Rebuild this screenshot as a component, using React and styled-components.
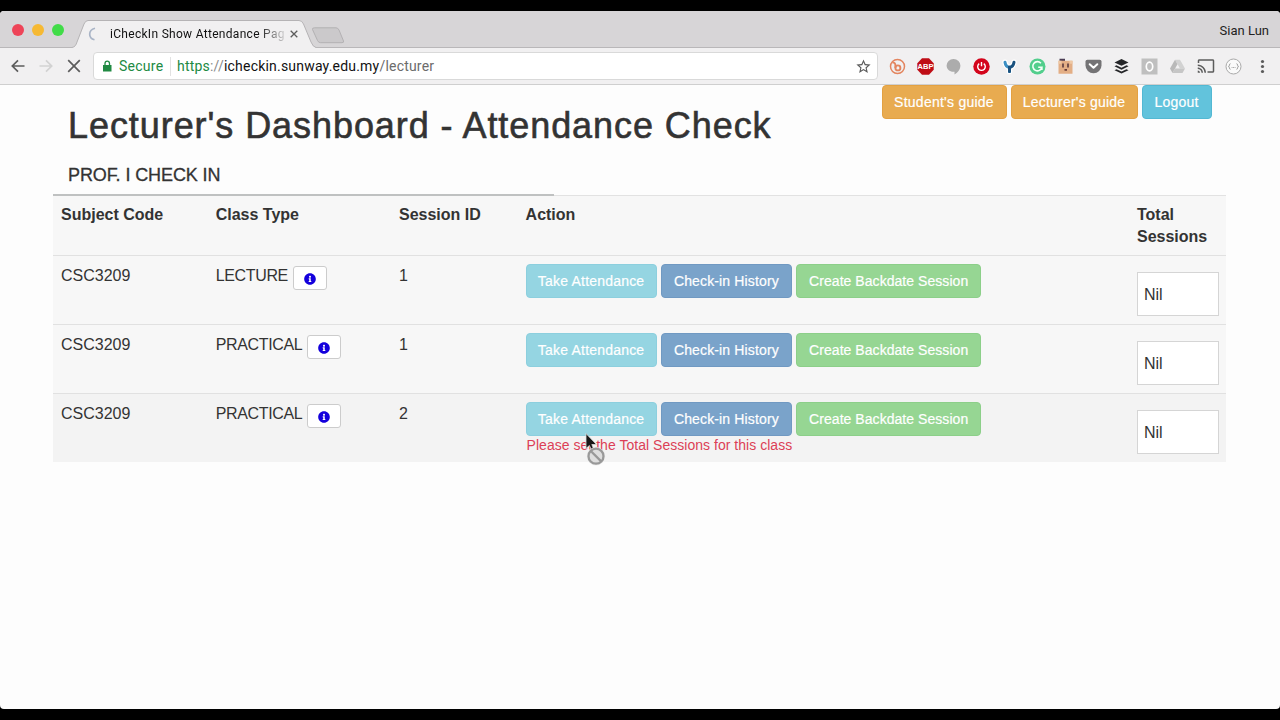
import styled, { createGlobalStyle, css } from "styled-components";
import { FaInfoCircle } from "react-icons/fa";
import { MdCast, MdStarBorder } from "react-icons/md";

const sessions = [
    { id: 1, code: "CSC3209", type: "LECTURE", session: "1" },
    { id: 2, code: "CSC3209", type: "PRACTICAL", session: "1" },
    { id: 3, code: "CSC3209", type: "PRACTICAL", session: "2", active: true, error: "Please set the Total Sessions for this class" },
];

const TabStrip = () => (
    <Strip>
        <Lights>
            <Light $color="#ee4458" />
            <Light $color="#f6b933" />
            <Light $color="#41dc48" />
        </Lights>
        <Tab>
            <TabShape viewBox="0 0 245 28">
                <path d="M0 27.5 C3 27 4 25 5 22 L12 4 Q13.500 .5 16 .5 H227 Q230 .5 231.500 4 L239 22 Q241 27 244 27.500 V28 H0Z" fill="#f1f0f1" />
                <path d="M0 27.500 C3 27 4 25 5 22 L12 4 Q13.500 .5 16 .5 H227 Q230 .5 231.500 4 L239 22 Q241 27 244 27.500" fill="none" stroke="#b5b3b5" />
            </TabShape>
            <Spinner viewBox="0 0 8 14">
                <path d="M7 1.200 C0 3 0 11 6.500 12.800" fill="none" stroke="#a9b4c6" strokeWidth="1.700" />
            </Spinner>
            <TabTitle>iCheckIn Show Attendance Pag</TabTitle>
            <CloseTab viewBox="0 0 8 8">
                <path d="M.7 .7 7.300 7.300M7.300 .7 .7 7.300" stroke="#5c5c5c" strokeWidth="1.300" />
            </CloseTab>
        </Tab>
        <NewTab viewBox="0 0 34 17">
            <path d="M3.500 .8 H25 Q27 .8 28 3 L32.500 14 Q33 15.700 31 15.700 H9.500 Q7.500 15.700 6.500 13.500 L1.500 2.500 Q1 .8 3.500 .8Z" fill="#cbc9cb" stroke="#b3b1b3" />
        </NewTab>
        <Profile>Sian Lun</Profile>
    </Strip>
);

const Extensions = () => (
    <ExtensionList>
        <Ext viewBox="0 0 17 17">
            <circle cx="8.500" cy="8.500" r="7" fill="none" stroke="#e3855f" strokeWidth="1.500" />
            <path d="M3.500 4.800 Q6.400 4 6.400 7.500 V10" fill="none" stroke="#e3855f" strokeWidth="1.900" />
            <circle cx="8.900" cy="9.900" r="2.500" fill="none" stroke="#e3855f" strokeWidth="1.900" />
        </Ext>
        <Ext viewBox="0 0 17 17">
            <path d="M5 .3h7l4.700 4.900v6.600L12 16.700H5L.3 11.800V5.200z" fill="#bf0d16" />
            <text x="8.500" y="11.300" textAnchor="middle" fontSize="7.500" fontWeight="700" fill="#fff">ABP</text>
        </Ext>
        <Ext viewBox="0 0 17 17">
            <path d="M8.500 1a6.800 6.400 0 0 1 6.900 6.600c0 4.200-3 7.300-5.900 8.800v-2.600C5 14.300 1.600 11.500 1.600 7.600A6.800 6.500 0 0 1 8.500 1z" fill="#acacac" />
        </Ext>
        <Ext viewBox="0 0 17 17">
            <circle cx="8.500" cy="8.500" r="8.200" fill="#d3041b" />
            <path d="M6.200 5.600a3.800 3.800 0 1 0 4.600 0M8.500 4.100v4.200" fill="none" stroke="#fff" strokeWidth="1.400" />
        </Ext>
        <Ext viewBox="0 0 17 17">
            <path d="M4 4.200 C4.500 8 6.500 9 8.500 9.300 C10.500 9 12.500 7.500 13 4.200M8.500 9v4.500" fill="none" stroke="#fff" strokeWidth="5.500" strokeLinecap="round" />
            <path d="M4 4.200 C4.500 8 6.500 9 8.500 9.300V13.500" fill="none" stroke="#3c8fc4" strokeWidth="3" strokeLinecap="round" />
            <path d="M13 4.200 C12.500 7.500 10.500 9 8.500 9.300V13.500" fill="none" stroke="#1b527f" strokeWidth="3" strokeLinecap="round" />
        </Ext>
        <Ext viewBox="0 0 17 17">
            <circle cx="8.500" cy="8.500" r="8" fill="#52ce8c" />
            <path d="M11.900 5.200a4.600 4.600 0 1 0 1 4.100H9.200M12.900 9.100v3" fill="none" stroke="#f4fff8" strokeWidth="1.600" />
        </Ext>
        <Ext viewBox="0 0 17 17">
            <path d="M2.500 .8h5.500v3H2.500z" fill="#4b3c54" />
            <path d="M1.500 2.700h14v13h-14z" fill="#e3ae85" />
            <path d="M1.500 2.700h3v3h-3zM12.500 2.700h3v3h-3z" fill="#efc8a4" />
            <path d="M6 5.500v4M11 5.500v4" stroke="#51323a" strokeWidth="1.500" />
            <path d="M7.500 11h2.500v1.700H7.500z" fill="#673b38" />
        </Ext>
        <Ext viewBox="0 0 17 17">
            <path d="M2.300 1.700h12.400q1.800 0 1.800 1.700v4.100a8 7.700 0 0 1-16 0V3.400q0-1.700 1.800-1.700z" fill="#747375" />
            <path d="M4.700 6.200l3.800 3.600 3.800-3.600" fill="none" stroke="#fff" strokeWidth="2" strokeLinecap="round" strokeLinejoin="round" />
        </Ext>
        <Ext viewBox="0 0 17 17">
            <path d="M8.500 1l7 3.400-7 3.400-7-3.400z" fill="#252629" />
            <path d="M1.500 8.300l2-1 5 2.400 5-2.400 2 1-7 3.400zM1.500 12.200l2-1 5 2.400 5-2.400 2 1-7 3.400z" fill="#252629" />
        </Ext>
        <Ext viewBox="0 0 17 17">
            <path d="M.5 .5h16v16H.5z" fill="#bfbfbf" />
            <ellipse cx="8.500" cy="8.500" rx="3.200" ry="4.300" fill="none" stroke="#fff" strokeWidth="1.700" />
        </Ext>
        <Ext viewBox="0 0 17 17">
            <path d="M6 1.800h5l5 8.700h-5z" fill="#d2d2d2" />
            <path d="M6 1.800l2.500 4.400L3.500 15 1 10.500z" fill="#b9b9b9" />
            <path d="M6 10.500h10L13.500 15h-10z" fill="#c6c6c6" />
        </Ext>
        <CastIcon />
        <Ext viewBox="0 0 17 17">
            <circle cx="8.500" cy="8.500" r="7.500" fill="#fafafa" stroke="#a9a9a9" />
            <path d="M5.600 5.700q-1.300 0-1.200 1.400 0 1.400-1 1.400 1 0 1 1.400-.1 1.400 1.200 1.400M11.400 5.700q1.300 0 1.200 1.400 0 1.400 1 1.400-1 0-1 1.400.1 1.400-1.200 1.400" fill="none" stroke="#a5a5a5" />
            <path d="M6.600 9.500h.9M8.100 9.500H9M9.600 9.500h.9" stroke="#a5a5a5" />
        </Ext>
        <Ext viewBox="0 0 17 17">
            <circle cx="8.500" cy="3.500" r="1.600" fill="#5a5a5a" />
            <circle cx="8.500" cy="8.500" r="1.600" fill="#5a5a5a" />
            <circle cx="8.500" cy="13.500" r="1.600" fill="#5a5a5a" />
        </Ext>
    </ExtensionList>
);

const Toolbar = () => (
    <Bar>
        <NavIcon viewBox="0 0 14 14">
            <path d="M13.500 7H1.500M7 1.300 1.300 7 7 12.700" />
        </NavIcon>
        <NavIcon viewBox="0 0 14 14" $faded>
            <path d="M.5 7h12M7 1.300 12.700 7 7 12.700" />
        </NavIcon>
        <NavIcon viewBox="0 0 14 14">
            <path d="M1.200 1.200l11.600 11.600M12.800 1.200L1.200 12.800" />
        </NavIcon>
        <Address>
            <LockIcon viewBox="0 0 12 12">
                <path d="M2 5h8.500v6.500H2z" fill="#218a43" />
                <path d="M4 5.500V3.400a2.250 2.250 0 0 1 4.500 0v2.100" fill="none" stroke="#218a43" strokeWidth="1.300" />
            </LockIcon>
            <Secure>Secure</Secure>
            <Url>
                <Scheme>https</Scheme>
                <Slashes>://</Slashes>
                <span>icheckin.sunway.edu.my</span>
                <Path>/lecturer</Path>
            </Url>
            <StarIcon />
        </Address>
        <Extensions />
    </Bar>
);

const SessionRow = ({ item }) => (
    <Row $active={item.active}>
        <TextCell>{item.code}</TextCell>
        <TextCell>
            <ClassType>
                {item.type}
                <InfoButton>
                    <FaInfoCircle size={12} />
                </InfoButton>
            </ClassType>
        </TextCell>
        <TextCell>{item.session}</TextCell>
        <Cell>
            <Actions>
                <Button $kind="info" $width={131} $spacing={0.2} disabled>Take Attendance</Button>
                <Button $kind="primary" $width={131} $spacing={0.14} disabled>Check-in History</Button>
                <Button $kind="success" $width={185} $spacing={0.05} disabled>Create Backdate Session</Button>
            </Actions>
            {item.error && <ErrorText>{item.error}</ErrorText>}
        </Cell>
        <Cell>
            <TotalInput defaultValue="Nil" />
        </Cell>
    </Row>
);

const App = () => {
    return (
        <Screen>
            <GlobalStyle />
            <Window>
                <TabStrip />
                <Toolbar />
                <Page>
                    <Header>
                        <div>
                            <Title>Lecturer's Dashboard - Attendance Check</Title>
                            <Name>PROF. I CHECK IN</Name>
                        </div>
                        <Guides>
                            <Button $kind="warning" $width={125} $spacing={0.25}>Student's guide</Button>
                            <Button $kind="warning" $width={127} $spacing={0.2}>Lecturer's guide</Button>
                            <Button $kind="logout" $width={70} $spacing={0.2}>Logout</Button>
                        </Guides>
                    </Header>
                    <Table>
                        <Divider />
                        <HeadRow>
                            <Cell>Subject Code</Cell>
                            <Cell>Class Type</Cell>
                            <Cell>Session ID</Cell>
                            <Cell>Action</Cell>
                            <Cell>Total Sessions</Cell>
                        </HeadRow>
                        {sessions.map((item) => (
                            <SessionRow key={item.id} item={item} />
                        ))}
                    </Table>
                </Page>
            </Window>
            <Pointer viewBox="0 0 24 34">
                <path d="M2 .5V15.500l3.400-3 2.200 4.800 2.300-1L7.800 11.500H12.500z" fill="#181818" stroke="#ddd" strokeWidth=".8" />
                <circle cx="12" cy="23.200" r="9.200" fill="#ececec" />
                <circle cx="12" cy="23.200" r="7.500" fill="#dedede" stroke="#999" strokeWidth="2.300" />
                <path d="M6.800 18l10.400 10.400" stroke="#999" strokeWidth="2.300" />
            </Pointer>
        </Screen>
    );
};

const GlobalStyle = createGlobalStyle`
  * {
    box-sizing: border-box;
  }

  body {
    margin: 0;
    background: #000;
    font-family: "Liberation Sans", Arial, sans-serif;
    color: #333;
    overflow: hidden;
  }
`;

const Screen = styled.div`
  position: relative;
  width: 1280px;
  height: 720px;
  padding: 11px 0;
  background: #000;
`;

const Window = styled.div`
  height: 698px;
  display: flex;
  flex-direction: column;
  border-radius: 4px;
  overflow: hidden;
  background: #fdfdfd;
`;

const Strip = styled.div`
  height: 37px;
  flex: none;
  display: flex;
  align-items: flex-end;
  background: #d7d5d7;
  border-bottom: 1px solid #b9b7b9;
  font-family: Roboto, sans-serif;
`;

const Lights = styled.div`
  display: flex;
  gap: 8px;
  width: 72px;
  padding: 0 0 11px 12px;
`;

const Light = styled.span`
  width: 12px;
  height: 12px;
  border-radius: 50%;
  background: ${(p) => p.$color};
`;

const Tab = styled.div`
  position: relative;
  display: flex;
  align-items: center;
  width: 244px;
  height: 28px;
  margin-bottom: -1px;
  padding-left: 16px;
`;

const TabShape = styled.svg`
  position: absolute;
  left: 0;
  top: 0;
  width: 245px;
  height: 28px;
`;

const Spinner = styled.svg`
  position: relative;
  width: 8px;
  height: 14px;
  margin-right: 14px;
`;

const TabTitle = styled.span`
  position: relative;
  width: 175px;
  white-space: nowrap;
  font-size: 12px;
  letter-spacing: 0.3px;
  color: #111;
  mask-image: linear-gradient(to right, #000 148px, transparent 179px);
`;

const CloseTab = styled.svg`
  position: relative;
  width: 8px;
  height: 8px;
  margin-left: 5px;
`;

const NewTab = styled.svg`
  width: 34px;
  height: 17px;
  margin: 0 0 3px -5px;
`;

const Profile = styled.span`
  margin-left: auto;
  padding: 0 11px 9px 0;
  font-size: 13px;
  color: #222;
`;

const Bar = styled.div`
  height: 37px;
  flex: none;
  display: flex;
  align-items: center;
  padding-left: 11px;
  background: #f1f0f1;
  border-bottom: 1px solid #cfcfcf;
`;

const NavIcon = styled.svg`
  width: 14px;
  height: 14px;
  margin-right: 14px;
  fill: none;
  stroke: ${(p) => (p.$faded ? "#d2d2d2" : "#5c5c5c")};
  stroke-width: 1.7;
`;

const Address = styled.div`
  display: flex;
  align-items: center;
  width: 785px;
  height: 28px;
  margin-left: -2px;
  padding-left: 7px;
  border: 1px solid #d9d9d9;
  border-radius: 4px;
  background: #fff;
  font-family: Roboto, sans-serif;
  font-size: 14px;
  white-space: nowrap;
`;

const LockIcon = styled.svg`
  width: 12px;
  height: 12px;
`;

const Secure = styled.span`
  width: 52px;
  height: 19px;
  line-height: 19px;
  margin-left: 6px;
  border-right: 1px solid #e2e2e2;
  letter-spacing: 0.25px;
  color: #218a43;
`;

const Url = styled.span`
  flex: 1;
  padding-left: 6px;
  letter-spacing: 0.2px;
  color: #111;
`;

const Scheme = styled.span`
  color: #218a43;
`;

const Slashes = styled.span`
  color: #8a8a8a;
`;

const Path = styled.span`
  color: #6b6b6b;
`;

const StarIcon = styled(MdStarBorder)`
  width: 17px;
  height: 17px;
  margin-right: 5px;
  color: #5c5c5c;
`;

const ExtensionList = styled.div`
  display: flex;
  align-items: center;
  gap: 11.08px;
  margin-left: 10.5px;
`;

const Ext = styled.svg`
  width: 17px;
  height: 17px;
  flex: none;
`;

const CastIcon = styled(MdCast)`
  width: 18px;
  height: 18px;
  margin: 0 -0.5px;
  flex: none;
  color: #5c5c5c;
`;

const Page = styled.main`
  flex: 1;
  padding: 0 54px 0 53px;
`;

const Header = styled.header`
  display: flex;
  justify-content: space-between;
  height: 109px;
  padding: 0 15px;
`;

const Title = styled.h1`
  margin: 21px 0 19px;
  font-size: 36px;
  font-weight: 400;
  line-height: 40px;
  letter-spacing: 0.93px;
  white-space: nowrap;
  -webkit-text-stroke: 0.6px #333;
`;

const Name = styled.h4`
  margin: 0;
  font-size: 18px;
  font-weight: 400;
  line-height: 20px;
  letter-spacing: -0.1px;
  -webkit-text-stroke: 0.3px #333;
`;

const Guides = styled.div`
  display: flex;
  gap: 4px;
  margin-right: -0.5px;
`;

const kinds = {
    info: ["#95d5e2", "#8ccfde"],
    primary: ["#7aa3ca", "#7099c2"],
    success: ["#96d693", "#8ccf89"],
    warning: ["#e8ab50", "#e3a142"],
    logout: ["#62c3dc", "#52b8d3"],
};

const Button = styled.button`
  width: ${(p) => p.$width}px;
  height: 34px;
  padding: 0;
  border-radius: 4px;
  border: 1px solid ${(p) => kinds[p.$kind][1]};
  background: ${(p) => kinds[p.$kind][0]};
  color: #fff;
  font-family: inherit;
  font-size: 14px;
  letter-spacing: ${(p) => p.$spacing}px;
  white-space: nowrap;
  -webkit-text-stroke: 0.2px #fff;
`;

const Table = styled.section`
  display: flex;
  flex-direction: column;
`;

const Divider = styled.div`
  height: 2px;
  margin-bottom: -1px;
  z-index: 1;
  width: 501px;
  background: #bfc1c1;
`;

const columns = css`
  display: grid;
  grid-template-columns: 154.7px 183.3px 126.6px 611.4px 97px;
`;

const HeadRow = styled.div`
  ${columns}
  height: 60px;
  background: #f7f7f7;
  border-top: 1px solid #e2e2e2;
  font-weight: 700;
`;

const Row = styled.div`
  ${columns}
  height: 69px;
  background: ${(p) => (p.$active ? "#f3f3f3" : "#f7f7f7")};
  border-top: 1px solid #e1e1e1;
`;

const Cell = styled.div`
  padding: 8px;
  font-size: 16px;
  line-height: 22px;
`;

const TextCell = styled(Cell)`
  padding-top: 9px;
`;

const ClassType = styled.div`
  display: flex;
  gap: 5px;
  letter-spacing: -0.35px;
`;

const InfoButton = styled.button`
  display: flex;
  align-items: center;
  justify-content: center;
  width: 34px;
  height: 24px;
  margin-top: 1px;
  padding: 1px 0 0;
  border: 1px solid #ccc;
  border-radius: 3px;
  background: #fff;
  color: #1400dc;
`;

const Actions = styled.div`
  display: flex;
  gap: 4.3px;
`;

const ErrorText = styled.p`
  margin: 1px 0 0 1px;
  font-size: 14px;
  line-height: 16px;
  letter-spacing: 0.03px;
  color: #dc3f56;
`;

const TotalInput = styled.input`
  display: block;
  width: 82px;
  height: 44px;
  margin-top: 8px;
  padding: 2px 6px 0;
  border: 1px solid #d5d5d5;
  background: #fff;
  color: #333;
  font-family: inherit;
  font-size: 16px;
`;

const Pointer = styled.svg`
  position: absolute;
  left: 584px;
  top: 433px;
  width: 24px;
  height: 34px;
`;

export default App;
